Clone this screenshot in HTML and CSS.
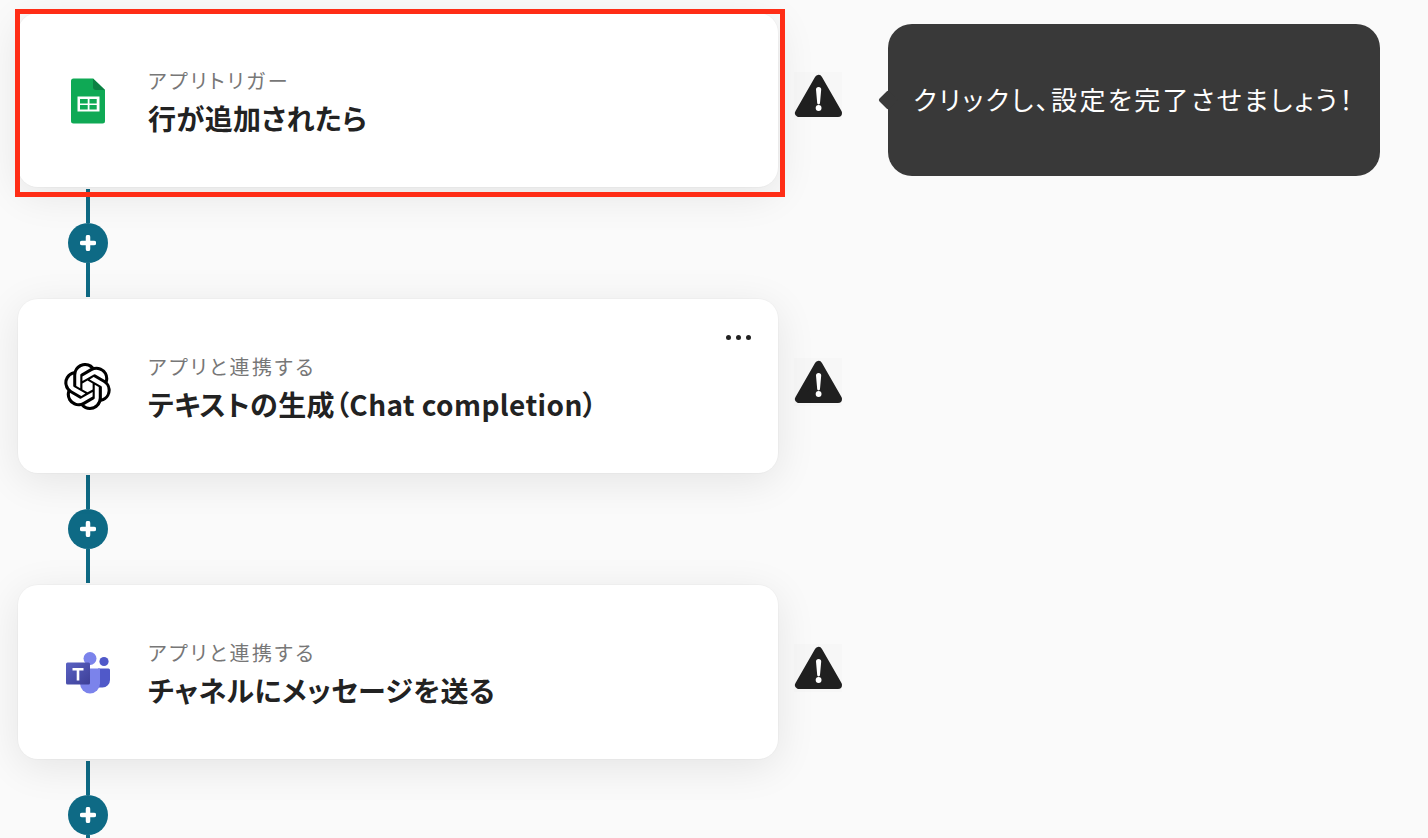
FILE: index.html
```html
<!DOCTYPE html>
<html lang="ja">
<head>
  <meta charset="UTF-8">
  <title>フローボット</title>
  <link rel="stylesheet" href="styles.css">
</head>
<body>
  <div class="flow">
    <div class="step">
      <div class="card card-active">
        <svg class="app-icon" width="47" height="47" viewBox="0 0 47 47">
          <path d="M9.500 1.500h19.500l12 11.500v31a2.500 2.500 0 0 1-2.500 2.500H9.500a2.500 2.500 0 0 1-2.500-2.500V4A2.500 2.500 0 0 1 9.500 1.500z" fill="#0fa955"/>
          <path d="M29 1.500l12 11.500v0h-9a3 3 0 0 1-3-3z" fill="#0b8043"/>
          <path d="M13.500 19.500h22v15h-22z" fill="#fff"/>
          <path d="M16 22h7.700v4.500H16zM25.500 22h7.200v4.500h-7.200zM16 28h7.700v4.500H16zM25.500 28h7.200v4.500h-7.200z" fill="#0fa955"/>
        </svg>
        <div class="card-text">
          <div class="card-label">アプリトリガー</div>
          <div class="card-title">行が追加されたら</div>
        </div>
      </div>
      <svg class="warn" width="48" height="48" viewBox="0 0 48 48">
        <rect width="48" height="48" fill="#f7f7f7"/>
        <path d="M24.500 7L5 41h39z" fill="#202020" stroke="#202020" stroke-width="8" stroke-linejoin="round"/>
        <path d="M22 17.500a2.600 2.600 0 0 1 5.200 0L26 31a1.400 1.400 0 0 1-2.800 0z" fill="#fff"/>
        <circle cx="24.600" cy="36" r="2.900" fill="#fff"/>
      </svg>
      <div class="tooltip">クリックし、設定を完了させましょう！</div>
    </div>

    <div class="connector">
      <div class="line"></div>
      <div class="add">
        <svg width="16" height="16" viewBox="0 0 16 16"><path d="M8 2v12M2 8h12" stroke="#fff" stroke-width="4.500" stroke-linecap="round"/></svg>
      </div>
      <div class="line"></div>
    </div>

    <div class="step">
      <div class="card">
        <svg class="app-icon" width="47" height="47" viewBox="0 0 24 24">
          <path d="M22.2819 9.8211a5.9847 5.9847 0 0 0-.5157-4.9108 6.0462 6.0462 0 0 0-6.5098-2.9A6.0651 6.0651 0 0 0 4.9807 4.1818a5.9847 5.9847 0 0 0-3.9977 2.9 6.0462 6.0462 0 0 0 .7427 7.0966 5.98 5.98 0 0 0 .511 4.9107 6.051 6.051 0 0 0 6.5146 2.9001A5.9847 5.9847 0 0 0 13.2599 24a6.0557 6.0557 0 0 0 5.7718-4.2058 5.9894 5.9894 0 0 0 3.9977-2.9001 6.0557 6.0557 0 0 0-.7475-7.0729zm-9.022 12.6081a4.4755 4.4755 0 0 1-2.8764-1.0408l.1419-.0804 4.7783-2.7582a.7948.7948 0 0 0 .3927-.6813v-6.7369l2.02 1.1686a.071.071 0 0 1 .038.052v5.5826a4.504 4.504 0 0 1-4.4945 4.4944zm-9.6607-4.1254a4.4708 4.4708 0 0 1-.5346-3.0137l.142.0852 4.783 2.7582a.7712.7712 0 0 0 .7806 0l5.8428-3.3685v2.3324a.0804.0804 0 0 1-.0332.0615L9.74 19.9502a4.4992 4.4992 0 0 1-6.1408-1.6464zM2.3408 7.8956a4.485 4.485 0 0 1 2.3655-1.9728V11.6a.7664.7664 0 0 0 .3879.6765l5.8144 3.3543-2.0201 1.1685a.0757.0757 0 0 1-.071 0l-4.8303-2.7865A4.504 4.504 0 0 1 2.3408 7.872zm16.5963 3.8558L13.1038 8.364 15.1192 7.2a.0757.0757 0 0 1 .071 0l4.8303 2.7913a4.4944 4.4944 0 0 1-.6765 8.1042v-5.6772a.79.79 0 0 0-.407-.667zm2.0107-3.0231l-.142-.0852-4.7735-2.7818a.7759.7759 0 0 0-.7854 0L9.409 9.2297V6.8974a.0662.0662 0 0 1 .0284-.0615l4.8303-2.7866a4.4992 4.4992 0 0 1 6.6802 4.66zM8.3065 12.863l-2.02-1.1638a.0804.0804 0 0 1-.038-.0567V6.0742a4.4992 4.4992 0 0 1 7.3757-3.4537l-.142.0805L8.704 5.459a.7948.7948 0 0 0-.3927.6813zm1.0976-2.3654l2.602-1.4998 2.6069 1.4998v2.9994l-2.5974 1.4997-2.6067-1.4997Z" fill="#000"/>
        </svg>
        <div class="card-text">
          <div class="card-label">アプリと連携する</div>
          <div class="card-title">テキストの生成（Chat completion）</div>
        </div>
        <div class="more"><span></span><span></span><span></span></div>
      </div>
      <svg class="warn" width="48" height="48" viewBox="0 0 48 48">
        <rect width="48" height="48" fill="#f7f7f7"/>
        <path d="M24.500 7L5 41h39z" fill="#202020" stroke="#202020" stroke-width="8" stroke-linejoin="round"/>
        <path d="M22 17.500a2.600 2.600 0 0 1 5.200 0L26 31a1.400 1.400 0 0 1-2.800 0z" fill="#fff"/>
        <circle cx="24.600" cy="36" r="2.900" fill="#fff"/>
      </svg>
    </div>

    <div class="connector">
      <div class="line"></div>
      <div class="add">
        <svg width="16" height="16" viewBox="0 0 16 16"><path d="M8 2v12M2 8h12" stroke="#fff" stroke-width="4.500" stroke-linecap="round"/></svg>
      </div>
      <div class="line"></div>
    </div>

    <div class="step">
      <div class="card">
        <svg class="app-icon" width="47" height="47" viewBox="0 0 47 47">
          <defs>
            <linearGradient id="teamsSquare" x1="0" y1="0" x2="1" y2="1">
              <stop offset="0" stop-color="#5a62c3"/>
              <stop offset="1" stop-color="#3d3f97"/>
            </linearGradient>
          </defs>
          <circle cx="40" cy="12.500" r="4.600" fill="#5059c9"/>
          <path d="M34 19.500h10.500a1.500 1.500 0 0 1 1.500 1.500v10a7.500 7.500 0 0 1-7.500 7.500H34z" fill="#5059c9"/>
          <circle cx="26" cy="9.500" r="6.500" fill="#7b83eb"/>
          <path d="M16 19.500h20v15a10 10 0 0 1-20 0z" fill="#7b83eb"/>
          <rect x="2" y="13.500" width="24" height="22" rx="1.500" fill="url(#teamsSquare)"/>
          <path d="M8.500 19h11v2.400h-4.200v10h-2.600v-10H8.500z" fill="#fff"/>
        </svg>
        <div class="card-text">
          <div class="card-label">アプリと連携する</div>
          <div class="card-title">チャネルにメッセージを送る</div>
        </div>
      </div>
      <svg class="warn" width="48" height="48" viewBox="0 0 48 48">
        <rect width="48" height="48" fill="#f7f7f7"/>
        <path d="M24.500 7L5 41h39z" fill="#202020" stroke="#202020" stroke-width="8" stroke-linejoin="round"/>
        <path d="M22 17.500a2.600 2.600 0 0 1 5.200 0L26 31a1.400 1.400 0 0 1-2.800 0z" fill="#fff"/>
        <circle cx="24.600" cy="36" r="2.900" fill="#fff"/>
      </svg>
    </div>

    <div class="connector">
      <div class="line"></div>
      <div class="add">
        <svg width="16" height="16" viewBox="0 0 16 16"><path d="M8 2v12M2 8h12" stroke="#fff" stroke-width="4.500" stroke-linecap="round"/></svg>
      </div>
      <div class="line"></div>
    </div>
  </div>
</body>
</html>
```

FILE: styles.css
```css
html, body { margin: 0; background: #fafafa; }
body { font-family: "Noto Sans CJK JP", "Noto Sans", sans-serif; color: #222; font-feature-settings: "palt"; }

.flow { height: 838px; box-sizing: border-box; padding: 13px 0 0 18px; overflow: hidden; }
.step { display: flex; align-items: center; }

.card { position: relative; display: flex; align-items: center; width: 760px; height: 174px; box-sizing: border-box; padding-left: 46px; background: #fff; border-radius: 20px; box-shadow: 0 0 0 1px rgba(0, 0, 0, .02), 0 8px 40px rgba(0, 0, 0, .09); }
.card-active::after { content: ""; position: absolute; left: -3px; top: -4px; width: 760px; height: 178px; border: 5px solid #ff2d16; }
.app-icon { flex: none; margin-right: 37px; }
.card-text { padding-top: 4px; }
.card-label { font-size: 20px; line-height: 26px; color: #777; letter-spacing: 2.6px; }
.card-title { margin-top: 5px; font-size: 28px; line-height: 38px; font-weight: 700; letter-spacing: .4px; }

.more { position: absolute; top: 36px; right: 27px; display: flex; gap: 5px; }
.more span { width: 5px; height: 5px; border-radius: 50%; background: #222; }

.warn { flex: none; margin: 0 0 8px 16px; }

.tooltip { position: relative; flex: none; width: 492px; height: 152px; margin-left: 46px; display: flex; align-items: center; justify-content: center; box-sizing: border-box; padding-bottom: 4px; background: #393939; border-radius: 24px; color: #fff; font-size: 26px; letter-spacing: 2.4px; }
.tooltip::before { content: ""; position: absolute; left: -7px; top: 69px; width: 14px; height: 14px; background: #393939; transform: rotate(45deg); border-radius: 2px; }

.connector { display: flex; flex-direction: column; align-items: center; width: 40px; height: 112px; margin-left: 50px; }
.line { width: 4px; flex: 1; margin: 2px 0; background: #0e6a85; }
.line:first-child { margin-bottom: 0; }
.line:last-child { margin-top: 0; }
.add { flex: none; display: flex; align-items: center; justify-content: center; width: 40px; height: 40px; border-radius: 50%; background: #0e6a85; }
```
